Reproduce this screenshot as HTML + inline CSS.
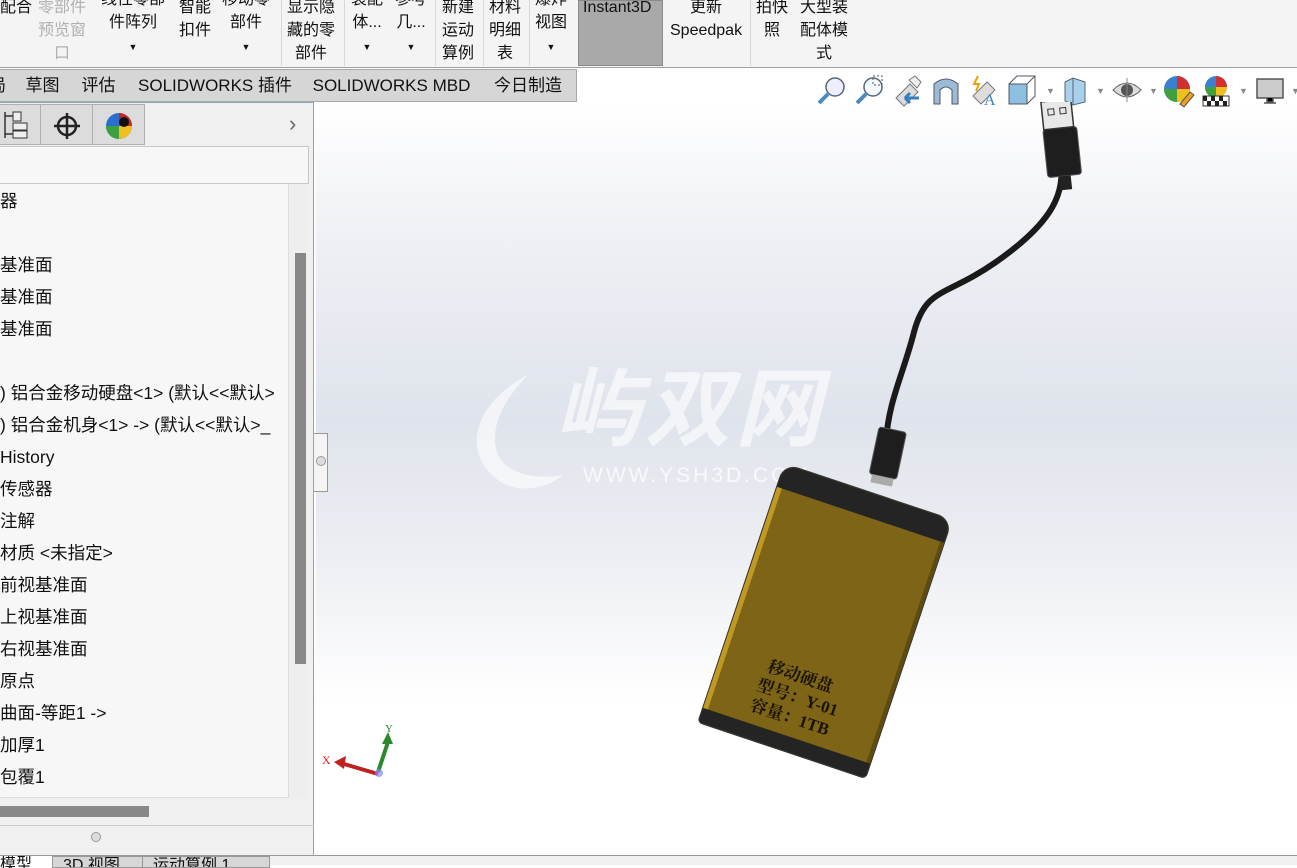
<!DOCTYPE html>
<html><head><meta charset="utf-8">
<style>
*{margin:0;padding:0;box-sizing:border-box}
body{width:1297px;height:865px;overflow:hidden;position:relative;background:#fff;font-family:"Liberation Sans","Noto Sans CJK SC",sans-serif;color:#111}
.abs{position:absolute}
.rb{position:absolute;top:-4px;font-size:16px;line-height:23px;text-align:center;white-space:nowrap}
.sep{position:absolute;top:0;height:66px;width:1px;background:#d8d8d8}
.arr{font-size:9px}
.tab{position:absolute;top:69px;height:33px;border:1px solid #a8a8a8;border-left:none;background:#d6d6d6;font-size:17px;line-height:31px;text-align:center}
.tree div{position:absolute;left:0;font-size:17.5px;line-height:20px;white-space:nowrap}
</style></head><body>
<!-- ribbon -->
<div class="abs" style="left:0;top:0;width:1297px;height:68px;background:#f4f4f4;border-bottom:1px solid #a0a0a0"></div>
<div class="rb" style="left:0">配合</div>
<div class="rb" style="left:38px;color:#b0b0b0">零部件<br>预览窗<br>口</div>
<div class="rb" style="left:101px;top:-12px">线性零部<br>件阵列<br><span class="arr">▼</span></div>
<div class="rb" style="left:179px">智能<br>扣件</div>
<div class="rb" style="left:222px;top:-12px">移动零<br>部件<br><span class="arr">▼</span></div>
<div class="sep" style="left:281px"></div>
<div class="rb" style="left:287px">显示隐<br>藏的零<br>部件</div>
<div class="sep" style="left:344px"></div>
<div class="rb" style="left:351px;top:-12px">装配<br>体...<br><span class="arr">▼</span></div>
<div class="rb" style="left:395px;top:-12px">参考<br>几...<br><span class="arr">▼</span></div>
<div class="sep" style="left:435px"></div>
<div class="rb" style="left:442px">新建<br>运动<br>算例</div>
<div class="sep" style="left:483px"></div>
<div class="rb" style="left:489px">材料<br>明细<br>表</div>
<div class="sep" style="left:529px"></div>
<div class="rb" style="left:535px;top:-12px">爆炸<br>视图<br><span class="arr">▼</span></div>
<div class="abs" style="left:578px;top:0;width:85px;height:66px;background:#a9a9a9;border:1px solid #8a8a8a"></div>
<div class="rb" style="left:583px">Instant3D</div>
<div class="rb" style="left:670px">更新<br>Speedpak</div>
<div class="sep" style="left:750px"></div>
<div class="rb" style="left:756px">拍快<br>照</div>
<div class="rb" style="left:800px">大型装<br>配体模<br>式</div>
<!-- tabs -->
<div class="tab" style="left:-20px;width:36px">局</div>
<div class="tab" style="left:15px;width:56px">草图</div>
<div class="tab" style="left:70px;width:58px">评估</div>
<div class="tab" style="left:127px;width:177px">SOLIDWORKS 插件</div>
<div class="tab" style="left:303px;width:178px">SOLIDWORKS MBD</div>
<div class="tab" style="left:480px;width:97px">今日制造</div>
<!-- viewport bg -->
<div class="abs" style="left:316px;top:102px;width:981px;height:753px;background:linear-gradient(180deg,#fff 0%,#eef0f5 18%,#dfe3eb 42%,#eceef3 60%,#fff 80%,#fff 100%)"></div>
<!-- left panel -->
<div class="abs" style="left:0;top:102px;width:314px;height:753px;background:#f0f0f0;border-right:1px solid #a0a0a0"></div>
<div class="abs" style="left:0;top:102px;width:314px;height:1px;background:#8ab"></div>
<div class="abs" style="left:-2px;top:104px;width:43px;height:41px;border:1px solid #b0b0b0;background:#dcdcdc"></div>
<div class="abs" style="left:40px;top:104px;width:53px;height:41px;border:1px solid #b0b0b0;background:#dcdcdc"></div>
<div class="abs" style="left:92px;top:104px;width:53px;height:41px;border:1px solid #b0b0b0;background:#dcdcdc"></div>
<svg class="abs" style="left:2px;top:110px" width="30" height="30"><path d="M3 2v26M3 6h8M3 24h8" stroke="#333" fill="none" stroke-width="1.5"/><rect x="11" y="2" width="8" height="9" fill="#eee" stroke="#333"/><rect x="11" y="13" width="14" height="7" fill="#eee" stroke="#333"/><rect x="11" y="21" width="14" height="7" fill="#eee" stroke="#333"/></svg>
<svg class="abs" style="left:52px;top:111px" width="30" height="30"><circle cx="15" cy="15" r="9" fill="none" stroke="#222" stroke-width="2.5"/><path d="M15 2v26M2 15h26" stroke="#222" stroke-width="2.5"/></svg>
<svg class="abs" style="left:104px;top:111px" width="30" height="30"><circle cx="15" cy="15" r="13" fill="#2a6fd0"/><path d="M15 15L15 2A13 13 0 0 1 28 15Z" fill="#c62828"/><path d="M15 15L28 15A13 13 0 0 1 15 28Z" fill="#f0c020"/><path d="M15 15L15 28A13 13 0 0 1 2 15Z" fill="#3aa040"/><circle cx="20" cy="11" r="5" fill="#111"/></svg>
<div class="abs" style="left:289px;top:111px;font-size:22px;color:#666">›</div>
<div class="abs" style="left:-1px;top:146px;width:310px;height:38px;background:#f7f7f7;border:1px solid #c8c8c8"></div>
<div class="abs" style="left:0;top:184px;width:289px;height:614px;background:#f7f7f7;border-right:1px solid #ddd;border-bottom:1px solid #ddd"></div>
<div class="abs" style="left:289px;top:184px;width:19px;height:614px;background:#eee"></div>
<div class="abs" style="left:295px;top:253px;width:11px;height:411px;background:#888"></div>
<div class="abs" style="left:0;top:806px;width:149px;height:11px;background:#888"></div>
<div class="abs" style="left:0;top:825px;width:314px;height:1px;background:#ccc"></div>
<div class="abs" style="left:91px;top:832px;width:10px;height:10px;border-radius:50%;background:#ddd;border:1px solid #999"></div>
<div class="abs" style="left:0;top:184px;width:289px;height:614px;overflow:hidden">
<div class="tree" style="position:relative;top:-184px">
<div style="top:191px">器</div>
<div style="top:255px">基准面</div>
<div style="top:287px">基准面</div>
<div style="top:319px">基准面</div>
<div style="top:383px">) 铝合金移动硬盘&lt;1&gt; (默认&lt;&lt;默认&gt;</div>
<div style="top:415px">) 铝合金机身&lt;1&gt; -&gt; (默认&lt;&lt;默认&gt;_</div>
<div style="top:447px">History</div>
<div style="top:479px">传感器</div>
<div style="top:511px">注解</div>
<div style="top:543px">材质 &lt;未指定&gt;</div>
<div style="top:575px">前视基准面</div>
<div style="top:607px">上视基准面</div>
<div style="top:639px">右视基准面</div>
<div style="top:671px">原点</div>
<div style="top:703px">曲面-等距1 -&gt;</div>
<div style="top:735px">加厚1</div>
<div style="top:767px">包覆1</div>
</div></div>
<div class="abs" style="left:314px;top:433px;width:14px;height:59px;background:#f4f4f4;border:1px solid #999;border-left:none"></div>
<div class="abs" style="left:316px;top:456px;width:10px;height:10px;border-radius:50%;background:#ddd;border:1px solid #999"></div>
<!-- watermark -->
<div class="abs" style="left:555px;top:360px;font-size:86px;font-weight:bold;font-style:italic;color:rgba(255,255,255,.6);letter-spacing:4px;line-height:100px">屿双网</div>
<svg class="abs" style="left:458px;top:370px" width="110" height="130"><path d="M70 5C20 30 0 80 40 110C60 125 90 118 105 105C80 110 50 105 40 85C30 60 45 30 70 5Z" fill="rgba(255,255,255,.6)"/></svg>
<div class="abs" style="left:583px;top:464px;font-size:21px;color:rgba(255,255,255,.75);letter-spacing:3px">WWW.YSH3D.COM</div>
<!-- view toolbar icons -->
<svg class="abs" style="left:815px;top:74px" width="482" height="34">
<g><circle cx="20" cy="13" r="9" fill="#eef" stroke="#567" stroke-width="1.5"/><path d="M13 20l-9 9" stroke="#4a8ac0" stroke-width="4"/></g>
<g transform="translate(38,0)"><circle cx="20" cy="13" r="9" fill="#f4f8ff" stroke="#567" stroke-width="1.5"/><path d="M13 20l-9 9" stroke="#4a8ac0" stroke-width="4"/><rect x="20" y="2" width="9" height="9" fill="none" stroke="#555" stroke-dasharray="2 2"/></g>
<g transform="translate(76,0)"><path d="M5 24l14-14 8 8-14 14z" fill="#ddd" stroke="#777"/><path d="M18 6l6-4 6 6-4 6z" fill="#eee" stroke="#777"/><path d="M14 24h14M14 24l5-5M14 24l5 5" stroke="#3a7ec0" stroke-width="3"/></g>
<g transform="translate(115,0)"><path d="M4 10q12-10 24 0v20h-6v-14q-6-6-12 0v14h-6z" fill="#9bbcd6" stroke="#556"/></g>
<g transform="translate(153,0)"><path d="M5 22l14-14 8 8-14 14z" fill="#ddd" stroke="#777"/><path d="M10 2l-4 8h5l-3 7" stroke="#f0a000" stroke-width="2" fill="none"/><text x="16" y="31" font-size="16" fill="#3a7ec0" font-family="Liberation Serif">A</text></g>
<g transform="translate(190,0)"><rect x="4" y="10" width="18" height="20" fill="#8cc0e0" stroke="#556"/><path d="M4 10l8-8h18v20l-8 8M22 10l8-8" fill="none" stroke="#556"/></g>
<text x="231" y="20" font-size="9" fill="#888">▼</text>
<g transform="translate(244,0)"><path d="M6 8l8-4 12 4v20l-12 3-8-4z" fill="#a8d0ea" stroke="#567"/><path d="M14 4v27" stroke="#567"/></g>
<text x="281" y="20" font-size="9" fill="#888">▼</text>
<g transform="translate(296,0)"><path d="M2 16q14-14 28 0q-14 14-28 0z" fill="#ddd" stroke="#666"/><circle cx="16" cy="16" r="6" fill="#555"/><path d="M16 4v24" stroke="#888"/></g>
<text x="334" y="20" font-size="9" fill="#888">▼</text>
<g transform="translate(347,0)"><circle cx="15" cy="15" r="13" fill="#3a7fd0"/><path d="M15 15V2a13 13 0 0 1 13 13z" fill="#d03030"/><path d="M15 15h13a13 13 0 0 1-13 13z" fill="#f0c020"/><path d="M15 15v13a13 13 0 0 1-13-13z" fill="#40a040"/><path d="M18 30l10-12 4 3-10 12z" fill="#e8a020" stroke="#555"/></g>
<g transform="translate(386,0)"><circle cx="15" cy="13" r="11" fill="#3a7fd0"/><path d="M15 13V2a11 11 0 0 1 11 11z" fill="#d03030"/><path d="M15 13h11a11 11 0 0 1-11 11z" fill="#f0c020"/><path d="M15 13v11a11 11 0 0 1-11-11z" fill="#40a040"/><rect x="2" y="22" width="26" height="10" fill="#fff" stroke="#333"/><path d="M2 22h4v5h-4zM10 22h4v5h-4zM18 22h4v5h-4zM6 27h4v5h-4zM14 27h4v5h-4zM22 27h4v5h-4z" fill="#222"/></g>
<text x="424" y="20" font-size="9" fill="#888">▼</text>
<g transform="translate(440,0)"><rect x="2" y="5" width="26" height="19" fill="#ccc" stroke="#555" stroke-width="1.5"/><path d="M12 24v4h6v-4M9 29h12" stroke="#555" stroke-width="1.5"/></g>
<text x="476" y="20" font-size="9" fill="#888">▼</text>
</svg>
<!-- cable -->
<svg class="abs" style="left:316px;top:102px" width="981" height="753">
<path d="M570 340C572 300 588 270 598 230C610 185 630 195 680 160C740 118 748 90 745 60" stroke="#1a1a1a" stroke-width="6" fill="none"/>
<g transform="translate(746,48) rotate(-6)"><rect x="-17" y="-22" width="34" height="48" rx="3" fill="#1e1e1e" stroke="#555"/><rect x="-6" y="26" width="12" height="14" fill="#222"/><rect x="-16" y="-50" width="30" height="28" fill="#e8e8e8" stroke="#333" stroke-width="1.5"/><rect x="-10" y="-42" width="6" height="6" fill="none" stroke="#333"/><rect x="2" y="-42" width="6" height="6" fill="none" stroke="#333"/></g>
<g transform="translate(571,355) rotate(12)"><rect x="-14" y="-28" width="28" height="48" rx="3" fill="#1e1e1e" stroke="#555"/><rect x="-11" y="20" width="22" height="8" fill="#aaa"/></g>
<path d="M62 670L72 640" stroke="#2a8a2a" stroke-width="4"/><path d="M72 630l-6 12h11z" fill="#2a8a2a"/>
<text x="69" y="630" font-size="11" fill="#2a8a2a" font-family="Liberation Serif">Y</text>
<path d="M62 672L28 662" stroke="#c02020" stroke-width="4"/><path d="M18 660l12-6-2 13z" fill="#c02020"/>
<text x="6" y="662" font-size="12" fill="#e02020" font-family="Liberation Serif">X</text>
<circle cx="63" cy="671" r="4" fill="#8888ff" opacity=".7"/>
</svg>
<!-- drive -->
<div class="abs" style="left:737px;top:485px;width:176px;height:272px;transform:rotate(18.5deg);border-radius:14px 14px 4px 4px;background:#7d6416;overflow:hidden;box-shadow:0 0 0 1px #333">
<div style="position:absolute;left:0;top:0;width:176px;height:24px;background:#242424;border-radius:14px 14px 0 0"></div>
<div style="position:absolute;left:0;bottom:0;width:176px;height:15px;background:#242424"></div>
<div style="position:absolute;left:0;top:24px;width:5px;height:233px;background:#c09a20"></div>
<div style="position:absolute;right:0;top:24px;width:4px;height:233px;background:#5e4b10"></div>
<div style="position:absolute;left:44px;top:186px;font-family:'Liberation Serif','Noto Serif CJK SC',serif;font-size:17px;line-height:21px;color:#1a1400;font-weight:bold">&nbsp;移动硬盘<br>型号：Y-01<br>容量：1TB</div>
</div>
<!-- bottom -->
<div class="abs" style="left:0;top:855px;width:1297px;height:10px;background:#f0f0f0;border-top:1px solid #999"></div>
<div class="abs" style="left:0;top:856px;width:52px;height:12px;background:#fff;font-size:16px;line-height:18px;overflow:hidden">模型</div>
<div class="abs" style="left:52px;top:856px;width:91px;height:12px;background:#d6d6d6;border:1px solid #999;font-size:16px;line-height:18px;overflow:hidden;padding-left:10px">3D 视图</div>
<div class="abs" style="left:142px;top:856px;width:128px;height:12px;background:#d6d6d6;border:1px solid #999;font-size:16px;line-height:18px;overflow:hidden;padding-left:10px">运动算例 1</div>
</body></html>
